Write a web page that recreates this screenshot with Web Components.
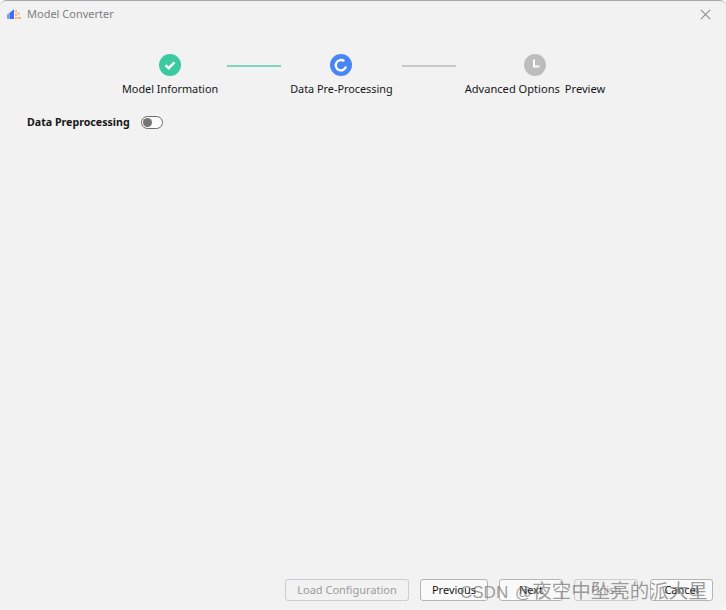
<!DOCTYPE html>
<html><head><meta charset="utf-8">
<style>
html,body{margin:0;padding:0;background:#fff;}
body{font-family:"Noto Sans","Noto Sans CJK SC",sans-serif;}
</style></head>
<body>
<template id="t-window"><style>
:host{display:flex;flex-direction:column;position:relative;width:726px;height:610px;box-sizing:border-box;background:#f2f2f2;border-top:1px solid #a9a9a9;border-radius:6px 6px 6px 0;overflow:hidden;color:#161616;font-size:11px;}
.body{flex:1;display:flex;flex-direction:column;min-height:0;}
</style><slot name="title"></slot><div class="body"><slot></slot></div><slot name="footer"></slot><slot name="overlay"></slot></template>

<template id="t-title"><style>
:host{display:flex;align-items:center;height:26px;padding:0 15px 0 7px;flex:none;}
.t{margin-left:6px;color:#7f7f7f;font-size:11px;line-height:26px;flex:1;}
svg{display:block}
</style>
<svg width="14" height="10" viewBox="0 0 14 10"><path d="M0 5.500 3 3.500V10H.7Q0 10 0 9.300Z" fill="#7d9cf6"/><path d="M3 3.500 7 .3V10H3Z" fill="#3f6ef3"/><g fill="#f6b26b"><rect x="8" y="1.500" width="2" height="2"/><rect x="10.500" y="3.500" width="2" height="2"/><rect x="8" y="5" width="2" height="1.800"/><rect x="8" y="8" width="2" height="2"/><rect x="10.800" y="8" width="3" height="2"/></g></svg>
<span class="t"><slot></slot></span>
<svg width="11" height="11" viewBox="0 0 11 11"><path d="M.8.8 10.200 10.200M10.200.8.8 10.200" stroke="#8c8c8c" stroke-width="1.100" fill="none"/></svg></template>

<template id="t-stepper"><style>
:host{display:flex;align-items:flex-start;gap:9px;padding:27px 0 0 122px;flex:none;}
</style><slot></slot></template>

<template id="t-step"><style>
:host{display:flex;flex-direction:column;align-items:center;font-size:10.850px;line-height:16px;white-space:nowrap;}
svg{display:block;margin-bottom:5px;}
.l{display:flex;gap:5px;}
</style><span id="i"></span><span class="l"><span><slot></slot></span><slot name="extra"></slot></span></template>

<template id="t-line"><style>
:host{display:block;width:54px;height:2px;margin-top:11px;background:var(--c,#c9c9c9);}
</style></template>

<template id="t-toggle"><style>
:host{display:flex;align-items:center;gap:11px;padding:17px 0 0 27px;font-weight:700;font-size:10.650px;line-height:17px;flex:none;}
.sw{width:20px;height:11px;border:1px solid #6b6b6b;border-radius:7px;background:#fbfbfb;position:relative;}
.k{position:absolute;left:1px;top:1px;width:9px;height:9px;border-radius:50%;background:#757575;}
</style><span><slot></slot></span><span class="sw"><span class="k"></span></span></template>

<template id="t-footer"><style>
:host{display:flex;justify-content:flex-end;gap:11px;padding:0 13px 9px 0;flex:none;}
</style><slot></slot></template>

<template id="t-btn"><style>
:host{display:flex;align-items:center;justify-content:center;box-sizing:border-box;height:22px;padding-bottom:1px;border:1px solid #b5b5b5;border-radius:3px;background:#fafafa;font-size:11px;color:#161616;white-space:nowrap;}
:host([disabled]){background:#f2f2f2;border-color:#cdcdcd;color:#9b9b9b;}
</style><slot></slot></template>

<template id="t-mark"><style>
:host{position:absolute;left:460px;top:578px;font-size:19.500px;line-height:24px;color:rgba(120,120,120,.72);white-space:nowrap;pointer-events:none;font-family:"Liberation Sans","Noto Sans CJK SC",sans-serif;}
::slotted(span){font-size:17px;word-spacing:2px;}
</style><slot></slot></template>

<app-window>
  <title-bar slot="title">Model Converter</title-bar>
  <step-bar>
    <step-item state="done">Model Information</step-item>
    <step-line style="--c:#7fd6bc"></step-line>
    <step-item state="active">Data Pre-Processing</step-item>
    <step-line></step-line>
    <step-item state="wait" style="font-size:11.100px">Advanced Options<span slot="extra">Preview</span></step-item>
  </step-bar>
  <toggle-row>Data Preprocessing</toggle-row>
  <foot-bar slot="footer">
    <ui-btn disabled style="width:124px">Load Configuration</ui-btn>
    <ui-btn style="width:68px">Previous</ui-btn>
    <ui-btn style="width:64px">Next</ui-btn>
    <ui-btn disabled style="width:64px">Finish</ui-btn>
    <ui-btn style="width:63px;margin-left:1px">Cancel</ui-btn>
  </foot-bar>
  <water-mark slot="overlay"><span>CSDN @</span>夜空中坠亮的派大星</water-mark>
</app-window>
<script>
const icons={
done:'<svg width="22" height="22" viewBox="0 0 22 22"><circle cx="11" cy="11" r="11" fill="#3cc9a0"/><path d="M6.500 11.200 9.700 14.200 15.500 8.300" fill="none" stroke="#fff" stroke-width="2.400"/></svg>',
active:'<svg width="22" height="22" viewBox="0 0 22 22"><circle cx="11" cy="11" r="11" fill="#4a85f6"/><path d="M14.300 7.200A5.200 5.200 0 1 0 16 12.500" fill="none" stroke="#fff" stroke-width="2.300"/></svg>',
wait:'<svg width="22" height="22" viewBox="0 0 22 22"><circle cx="11" cy="11" r="11" fill="#bdbdbd"/><path d="M10 5.500V12.500H15.500" fill="none" stroke="#fff" stroke-width="2"/></svg>'};
function def(name,tpl,init){customElements.define(name,class extends HTMLElement{constructor(){super();const s=this.attachShadow({mode:'open'});s.appendChild(document.getElementById(tpl).content.cloneNode(true));}connectedCallback(){init&&init(this);}});}
def('app-window','t-window');
def('title-bar','t-title');
def('step-bar','t-stepper');
def('step-item','t-step',e=>{e.shadowRoot.getElementById('i').innerHTML=icons[e.getAttribute('state')];});
def('step-line','t-line');
def('toggle-row','t-toggle');
def('foot-bar','t-footer');
def('ui-btn','t-btn');
def('water-mark','t-mark');
</script>
</body></html>
